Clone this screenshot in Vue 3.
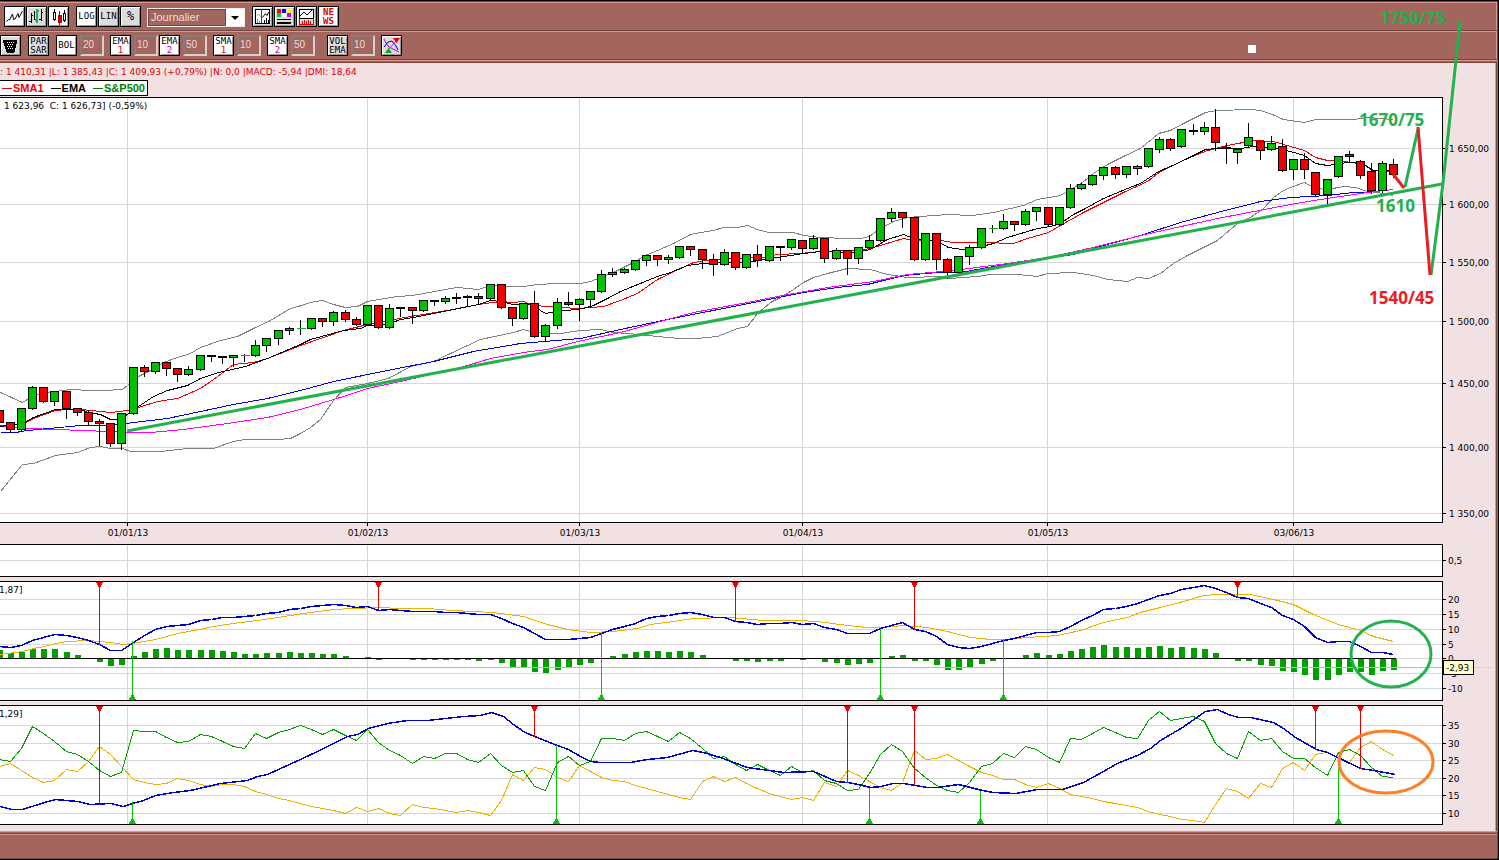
<template>
  <div class="app">
    <header class="toolbar">
      <button type="button" class="tool lit" aria-label="Line chart">
        <svg class="smooth" viewBox="0 0 19 19"><path d="M1.500 14.500l2-2 1 .5 3-6 1 5.500 1.500-.5 3-5.500 1 4 3.500-6.500" /></svg>
      </button>
      <button type="button" class="tool" aria-label="Bar chart">
        <svg viewBox="0 0 19 19">
          <path d="M4 6v10M2 14h2M4 8h2M7 4v9M14 2v12M12 12h2M14 5h2" stroke-width="1" />
          <path d="M10 2v14M8 13h2M10 4h2" stroke="#22b14c" stroke-width="2" />
        </svg>
      </button>
      <button type="button" class="tool lit" aria-label="Candlesticks">
        <svg viewBox="0 0 19 19">
          <path d="M5 2v12M15 3v12" />
          <path d="M4 5h2v7h-2zM14 6h2v7h-2z" fill="#fff" />
          <path d="M10 4v14" stroke="#c00000" />
          <path d="M9 8h3v7h-3z" fill="#c00000" stroke="#c00000" />
        </svg>
      </button>
      <button type="button" class="tool lit group">LOG</button>
      <button type="button" class="tool">LIN</button>
      <button type="button" class="tool percent">%</button>

      <div class="period">
        <select v-model="period" aria-label="Period">
          <option>Journalier</option>
          <option>Hebdomadaire</option>
          <option>Mensuel</option>
        </select>
        <svg class="arrow" viewBox="0 0 18 17" aria-hidden="true"><path d="M5 7h8l-4 4z" fill="#000" stroke="none" /></svg>
      </div>

      <button type="button" class="tool group" aria-label="Cursor">
        <svg viewBox="0 0 19 19">
          <path d="M2 2h14v14h-14z" fill="#fff" />
          <path d="M4 16v-4M6 16v-2" stroke="#888" />
          <path class="thin" d="M4 9l2-2 2 3" stroke="#aaa" />
          <path class="thin" d="M9.500 10.500l3-4 1.500 2 2-3.500" />
          <path d="M11 16v-3M13 16v-5M15 16v-3" />
          <path d="M8 2v14" stroke="#e00000" />
        </svg>
      </button>
      <button type="button" class="tool" aria-label="Colours">
        <svg viewBox="0 0 19 19">
          <g stroke="none">
            <path d="M2 2h4v4H2z" fill="#f00" /><path d="M7 2h4v4H7z" fill="#00f" /><path d="M12 2h4v4h-4z" fill="#ff0" />
            <path d="M2 6h4v4H2z" fill="#0c4" /><path d="M7 6h4v4H7z" fill="#fff" /><path d="M12 6h4v4h-4z" fill="#c0f" />
            <path d="M2 12h14v1H2zM2 15h14v2H2z" fill="#000" />
          </g>
        </svg>
      </button>
      <button type="button" class="tool" aria-label="Indicators">
        <svg viewBox="0 0 19 19">
          <path d="M2 2h14v9h-14z" fill="#fff" />
          <path class="thin" d="M3 9l4-4 3 3 5-5" />
          <path d="M2 12v5h14v-5M5 17v-3M7 17v-4M9 17v-3M11 17v-4M13 17v-3" stroke="#e00000" />
        </svg>
      </button>
      <button type="button" class="tool lit news"><span>NE</span><span>WS</span></button>
    </header>

    <div class="toolbar second">
      <button type="button" class="tool" aria-label="Clear">
        <svg viewBox="0 0 19 19">
          <path d="M2 4h14l-3 12h-7z" fill="#000" />
          <path d="M6 6h1m1 0h1m1 0h1m1 0h1M7 8h1m1 0h1m1 0h1M6 10h1m1 0h1m1 0h1M7 12h1m1 0h1m1 0h1" stroke="#fff" />
        </svg>
      </button>
      <button type="button" class="tool group">PAR<span>SAR</span></button>
      <template v-for="ind in indicators" :key="ind.label + ind.index">
        <button type="button" class="tool" :class="[ind.tone, { lit: ind.lit }]">
          {{ ind.label }}<span v-if="ind.index">{{ ind.index }}</span>
        </button>
        <input v-model="ind.value" class="length" type="text" :aria-label="ind.label + ' ' + ind.index" />
      </template>
      <button type="button" class="tool spaced" aria-label="Signals">
        <svg class="smooth" viewBox="0 0 19 19">
          <path d="M2 3l2 4 3 4 4 2 6 3" stroke="#a0f" />
          <path d="M2 11l4-5 4-1 4 5 2 4" stroke="#00c" />
          <path d="M5 15L15 4" stroke="#f0f" />
          <path d="M11 2h7l-3.500 5z" fill="#e00000" stroke="none" />
          <path d="M3 17h7l-3.500-5z" fill="#00b400" stroke="none" />
        </svg>
      </button>
      <span class="marker"></span>
    </div>

    <main class="panel">
      <p class="info">: 1 410,31 |L: 1 385,43 |C: 1 409,93 (+0,79%) |N: 0,0 |MACD: -5,94 |DMI: 18,64</p>
      <div class="legend">
        <span class="red">SMA1</span>
        <span class="black">EMA</span>
        <span class="green">S&amp;P500</span>
      </div>

      <section class="pane price">
        <svg class="plot">
          <g transform="translate(0.5 -97.5)">
            <path v-for="y in priceTicks" :key="y.at" class="grid" :d="`M-1 ${y.at}H4000`" />
            <path v-for="m in months" :key="m.x" class="grid" :d="`M${m.x} 90V530`" />
            <polyline v-for="l in priceLines" :key="l.name" :stroke="l.color" :points="l.points" />
            <g v-for="(c, i) in candles" :key="i">
              <path class="wick" :d="`M${barX(i)} ${c[0]}V${c[3]}`" />
              <path v-if="c[4] === 'x'" stroke="#00c000" :d="`M${barX(i) - 4} ${c[1]}h9`" />
              <rect v-else class="body" :x="barX(i) - 4" :y="c[1]" width="8" :height="c[2] - c[1] - 1" :fill="fills[c[4]]" />
            </g>
          </g>
          <text x="4" y="11">1 623,96&#160; C: 1 626,73] (-0,59%)</text>
        </svg>
        <svg class="axis">
          <g v-for="y in priceTicks" :key="y.at" :transform="`translate(0 ${y.at - 97})`">
            <path d="M0 .5h3" /><text x="6" y="4">{{ y.label }}</text>
          </g>
        </svg>
      </section>

      <svg class="dates">
        <g v-for="m in months" :key="m.x">
          <path :d="`M${m.x}.5 0v3`" /><text :x="m.x + 1" y="13" text-anchor="middle">{{ m.label }}</text>
        </g>
      </svg>

      <section class="pane volume">
        <svg class="plot">
          <g transform="translate(0.5 -544.5)">
            <path class="grid" d="M-1 560H4000" />
            <path v-for="m in months" :key="m.x" class="grid" :d="`M${m.x} 540V580`" />
          </g>
        </svg>
        <svg class="axis"><path d="M0 16.500h3" /><text x="5" y="20">0,5</text></svg>
      </section>

      <section class="pane study">
        <svg class="plot">
          <g transform="translate(0.5 -581.5)">
            <path v-for="y in macdTicks" :key="y.at" class="grid" :d="`M-1 ${y.at}H4000`" />
            <path v-for="m in months" :key="m.x" class="grid" :d="`M${m.x} 580V702`" />
            <rect v-for="(h, i) in histogram" :key="i" class="hist" :x="barX(i) - 2.5" :y="658.5 - Math.max(h, 0)" width="6" :height="Math.abs(h)" />
            <path class="cursor" d="M-1 667H4000" />
            <path class="wick" d="M-1 658H1395" />
            <polyline stroke="#f0b000" :points="macdSignal" />
            <polyline class="bold" :points="macdLine" />
            <g v-for="s in macdSignals" :key="s.x">
              <path :class="s.side" :d="markerPath(s, 582, 699)" />
            </g>
          </g>
          <text x="-1" y="11">1,87]</text>
        </svg>
        <svg class="axis">
          <g v-for="y in macdTicks" :key="y.at" :transform="`translate(0 ${y.at - 581})`">
            <path d="M0 .5h3" /><text x="5" y="4">{{ y.label }}</text>
          </g>
          <path class="hint-line" d="M30 86.500h20" />
          <rect class="hint" x="0.5" y="79.500" width="30" height="14" />
          <text x="3" y="90">-2,93</text>
        </svg>
      </section>

      <section class="pane study">
        <svg class="plot">
          <g transform="translate(0.5 -705.5)">
            <path v-for="y in dmiTicks" :key="y.at" class="grid" :d="`M-1 ${y.at}H4000`" />
            <path v-for="m in months" :key="m.x" class="grid" :d="`M${m.x} 700V826`" />
            <polyline stroke="#f0b000" :points="diMinus" />
            <polyline stroke="#00a000" :points="diPlus" />
            <polyline class="bold" :points="adx" />
            <g v-for="s in dmiSignals" :key="s.x + s.side">
              <path :class="s.side" :d="markerPath(s, 706, 823)" />
            </g>
          </g>
          <text x="-1" y="11">1,29]</text>
        </svg>
        <svg class="axis">
          <g v-for="y in dmiTicks" :key="y.at" :transform="`translate(0 ${y.at - 705})`">
            <path d="M0 .5h3" /><text x="5" y="4">{{ y.label }}</text>
          </g>
        </svg>
      </section>
    </main>

    <footer class="status"></footer>

    <svg class="annotations">
      <g class="pen-green">
        <path d="M127 431L1442 184M1405 187L1418 129M1431 275L1443 183L1460 22" />
        <ellipse cx="1391" cy="654" rx="40" ry="33" />
      </g>
      <path class="pen-red" d="M1393 174L1404 188M1418 127L1430 275" />
      <ellipse class="pen-orange" cx="1386" cy="762" rx="47" ry="31" />
      <g class="green-note">
        <text x="1380" y="24">1750/75</text>
        <text x="1359" y="126">1670/75</text>
        <text x="1376" y="212">1610</text>
      </g>
      <text class="red-note" x="1369" y="304">1540/45</text>
    </svg>
  </div>
</template>

<script setup>
import { reactive, ref } from 'vue'

const period = ref('Journalier')

const indicators = reactive([
  { label: 'BOL', index: '', value: '20', tone: 'group', lit: true },
  { label: 'EMA', index: '1', value: '10', tone: 'one spaced', lit: true },
  { label: 'EMA', index: '2', value: '50', tone: 'two', lit: true },
  { label: 'SMA', index: '1', value: '10', tone: 'one spaced', lit: true },
  { label: 'SMA', index: '2', value: '50', tone: 'two spaced', lit: true },
  { label: 'VOL', index: 'EMA', value: '10', tone: 'wide', lit: false },
])

const months = [
  { x: 127, label: '01/01/13' },
  { x: 367, label: '01/02/13' },
  { x: 579, label: '01/03/13' },
  { x: 802, label: '01/04/13' },
  { x: 1047, label: '01/05/13' },
  { x: 1293, label: '03/06/13' },
]

const ticks = (ys, labels) => ys.map((at, i) => ({ at, label: labels[i] }))

const priceTicks = ticks(
  [148, 204, 262, 321, 383, 447, 513],
  ['1 650,00', '1 600,00', '1 550,00', '1 500,00', '1 450,00', '1 400,00', '1 350,00']
)
const macdTicks = ticks([599, 614, 629, 644, 658, 673, 688], ['20', '15', '10', '5', '0', '-5', '-10'])
const dmiTicks = ticks([725, 743, 760, 778, 795, 813], ['35', '30', '25', '20', '15', '10'])

// one bar per trading day
const barX = (i) => Math.round(-1.3 + 11.158 * i)
const daily = (ys) => ys.map((y, i) => `${barX(i)},${y}`).join(' ')

const fills = { g: '#00c000', r: '#f00000', k: '#000' }

// high, body top, body bottom, low, colour
const candles = [
  [410, 410, 423, 423, 'r'], [422, 422, 430, 432, 'r'], [407, 408, 430, 430, 'g'], [385, 387, 409, 409, 'g'],
  [386, 387, 402, 402, 'r'], [391, 391, 402, 405, 'g'], [391, 391, 409, 418, 'r'], [408, 408, 413, 415, 'r'],
  [409, 412, 422, 425, 'r'], [418, 421, 424, 445, 'r'], [423, 423, 444, 446, 'r'], [412, 413, 444, 449, 'g'],
  [367, 367, 414, 414, 'g'], [364, 367, 372, 376, 'r'], [361, 362, 372, 373, 'g'], [362, 362, 369, 375, 'r'],
  [368, 368, 375, 381, 'r'], [365, 369, 375, 375, 'g'], [355, 355, 370, 370, 'g'], [355, 355, 357, 361, 'k'],
  [356, 356, 358, 363, 'k'], [354, 355, 358, 366, 'g'], [353, 355, 356, 361, 'x'], [339, 345, 356, 356, 'g'],
  [338, 338, 346, 351, 'g'], [330, 330, 339, 344, 'g'], [326, 328, 331, 334, 'g'], [319, 328, 329, 334, 'x'],
  [317, 318, 329, 329, 'g'], [317, 318, 322, 326, 'r'], [310, 312, 322, 325, 'g'], [309, 312, 320, 321, 'r'],
  [316, 319, 325, 325, 'r'], [304, 305, 325, 325, 'g'], [305, 305, 328, 328, 'r'], [303, 308, 328, 328, 'g'],
  [306, 307, 309, 316, 'k'], [306, 307, 311, 323, 'r'], [299, 300, 311, 311, 'g'], [299, 300, 302, 305, 'k'],
  [295, 298, 302, 303, 'g'], [292, 297, 299, 303, 'k'], [294, 296, 298, 305, 'k'], [292, 296, 299, 304, 'r'],
  [284, 284, 299, 299, 'g'], [284, 284, 308, 308, 'r'], [307, 307, 319, 325, 'r'], [303, 303, 319, 319, 'g'],
  [290, 303, 337, 337, 'r'], [323, 325, 337, 340, 'g'], [297, 302, 326, 328, 'g'], [291, 302, 305, 305, 'r'],
  [297, 299, 305, 320, 'g'], [291, 291, 300, 307, 'g'], [269, 274, 292, 292, 'g'], [267, 272, 275, 276, 'g'],
  [267, 269, 273, 273, 'g'], [259, 260, 270, 270, 'g'], [255, 255, 261, 265, 'g'], [254, 255, 260, 265, 'r'],
  [254, 257, 260, 263, 'g'], [246, 246, 258, 258, 'g'], [246, 246, 250, 255, 'r'], [249, 249, 260, 268, 'r'],
  [253, 259, 265, 275, 'r'], [248, 252, 265, 265, 'g'], [252, 252, 268, 269, 'r'], [253, 254, 268, 268, 'g'],
  [244, 254, 261, 266, 'r'], [246, 246, 261, 261, 'g'], [245, 246, 248, 260, 'k'], [238, 239, 248, 249, 'g'],
  [239, 240, 249, 252, 'r'], [234, 238, 249, 249, 'g'], [237, 238, 259, 262, 'r'], [247, 250, 259, 259, 'g'],
  [250, 250, 259, 274, 'r'], [247, 247, 259, 263, 'g'], [234, 240, 248, 248, 'g'], [217, 218, 241, 241, 'g'],
  [207, 212, 219, 221, 'g'], [212, 212, 218, 227, 'r'], [217, 217, 260, 260, 'r'], [232, 233, 260, 260, 'g'],
  [233, 233, 260, 269, 'r'], [257, 259, 273, 278, 'r'], [255, 256, 273, 273, 'g'], [244, 247, 257, 264, 'g'],
  [228, 228, 248, 248, 'g'], [224, 228, 229, 232, 'x'], [213, 221, 229, 229, 'g'], [220, 221, 225, 230, 'r'],
  [208, 211, 225, 225, 'g'], [207, 207, 212, 220, 'g'], [207, 207, 225, 226, 'r'], [206, 207, 225, 225, 'g'],
  [183, 188, 208, 208, 'g'], [182, 184, 189, 189, 'g'], [175, 175, 185, 185, 'g'], [167, 167, 176, 179, 'g'],
  [165, 167, 175, 178, 'r'], [166, 166, 175, 177, 'g'], [164, 166, 169, 174, 'g'], [147, 148, 167, 167, 'g'],
  [136, 139, 150, 152, 'g'], [137, 139, 149, 150, 'r'], [129, 129, 147, 147, 'g'], [123, 130, 132, 134, 'k'],
  [121, 127, 132, 134, 'g'], [108, 127, 143, 150, 'r'], [142, 147, 149, 163, 'k'], [149, 149, 153, 163, 'g'],
  [122, 137, 146, 146, 'g'], [141, 141, 151, 159, 'r'], [135, 143, 150, 150, 'g'], [138, 146, 171, 171, 'r'],
  [159, 159, 170, 179, 'g'], [152, 159, 170, 178, 'r'], [171, 172, 195, 196, 'r'], [179, 179, 195, 206, 'g'],
  [155, 156, 177, 177, 'g'], [150, 154, 157, 161, 'r'], [159, 161, 176, 178, 'r'], [162, 171, 191, 193, 'r'],
  [160, 163, 191, 192, 'g'], [158, 164, 175, 177, 'r'],
]

const priceLines = [
  {
    name: 'bollinger upper',
    color: '#808080',
    points:
      '0,392 22,402 33,395 55,391 70,389 90,390 104,390 122,389 127,385 133,379 138,376 150,370 163,362 177,357 190,353 200,347 220,340 237,336 253,328 270,320 288,309 310,302 322,300 333,304 345,307 357,306 367,301 378,299 397,296 412,295 423,293 445,289 457,287 478,289 490,285 507,286 523,286 537,284 557,283 580,283 590,281 613,272 633,262 647,254 657,250 673,243 690,234 700,232 713,230 723,227 737,227 747,225 757,229 768,232 793,232 803,235 820,237 847,238 860,238 869,236 880,228 893,221 907,217 920,216 947,214 972,215 993,212 1023,205 1037,199 1060,195 1070,189 1082,182 1093,173 1107,164 1123,156 1140,148 1158,133 1170,130 1183,123 1205,112 1217,110 1250,109 1260,110 1272,114 1283,119 1290,120 1304,122 1315,119 1353,119 1367,117 1393,119',
  },
  {
    name: 'bollinger lower',
    color: '#808080',
    points:
      '0,491 22,464 33,463 55,455 77,452 90,447 100,446 110,448 122,448 130,451 160,451 187,448 213,448 233,441 245,439 277,439 290,438 300,433 310,427 320,419 333,400 345,387 367,383 388,378 410,366 433,361 450,353 480,339 513,332 523,329 530,331 545,333 560,333 580,330 600,329 613,332 627,333 647,335 667,337 680,338 697,338 717,336 737,328 747,326 757,313 770,302 780,297 793,289 803,282 813,277 827,273 847,268 870,269 887,274 907,277 940,276 948,278 977,276 990,274 1017,274 1037,276 1047,273 1073,272 1093,275 1107,279 1127,281 1137,277 1148,278 1160,273 1173,263 1187,255 1217,240 1237,223 1250,217 1263,208 1273,197 1283,190 1290,187 1304,182 1315,188 1327,189 1343,186 1355,187 1367,191 1377,192 1393,195',
  },
  {
    name: 'ema 50',
    color: '#0000e0',
    points:
      '0,432 15,432 27,430 80,425 110,425 133,422 167,418 233,404 267,398 300,390 333,381 387,370 433,361 473,351 520,343 580,338 620,329 667,319 753,302 803,292 837,287 867,284 903,275 937,272 960,272 1010,263 1073,254 1107,244 1140,235 1180,222 1217,212 1260,201 1290,197 1310,196 1327,195 1353,192 1380,191',
  },
  {
    name: 'sma 50',
    color: '#ff00ff',
    points:
      '0,426 27,428 83,430 133,432 150,432 183,429 227,423 267,417 300,409 343,396 367,388 400,381 460,367 490,358 523,352 547,349 577,341 620,332 667,319 693,312 747,302 777,296 827,287 873,281 907,274 953,270 1007,263 1047,257 1093,247 1140,235 1217,218 1290,204 1313,200 1367,192 1393,189',
  },
  {
    name: 'sma 10',
    color: '#f00000',
    points:
      '0,425 22,424 33,418 55,410 67,409 80,409 100,411 110,412 127,410 138,407 157,401 177,398 200,388 213,379 233,364 253,362 267,358 300,345 343,330 367,324 410,316 447,310 478,304 500,301 513,302 523,301 533,305 547,306 577,308 603,306 620,300 637,293 657,279 680,268 693,262 713,259 763,257 777,254 800,253 820,251 860,250 873,247 903,238 913,240 940,240 953,242 983,242 1013,243 1027,238 1048,232 1067,221 1083,212 1123,192 1147,181 1157,173 1170,166 1187,158 1207,150 1227,145 1253,140 1273,141 1290,146 1304,150 1315,157 1327,160 1343,161 1362,163 1373,170 1393,171',
  },
  {
    name: 'ema 10',
    color: '#000',
    points:
      '0,426 22,423 33,417 55,409 67,409 80,409 88,412 100,414 110,419 117,419 127,414 138,406 153,396 167,390 187,385 200,378 218,372 245,366 267,358 300,344 310,339 343,330 360,328 367,325 387,324 400,319 413,317 433,313 453,309 478,304 490,300 500,301 513,304 530,304 545,313 557,311 567,310 583,308 593,305 607,298 620,291 657,276 670,272 687,265 703,263 730,262 753,261 777,257 803,253 820,251 853,252 870,249 887,239 903,234 913,238 937,241 948,247 962,249 977,247 993,243 1007,237 1037,228 1050,226 1060,223 1073,214 1083,209 1103,198 1127,188 1140,183 1158,171 1170,166 1187,158 1205,149 1217,148 1240,148 1253,146 1273,147 1290,151 1304,155 1315,163 1327,165 1347,162 1362,163 1372,170 1393,170',
  },
]

const histogram = [
  9, 6, 7, 10, 10, 10, 7, 4, 0, -3, -7, -6, 3, 7, 10, 11, 9, 9, 9, 9, 8, 7, 5, 5, 6, 6, 7, 6, 6, 5, 5, 3, 1, 2, -1,
  0, 0, -1, -1, -1, -1, -1, -1, -2, -1, -4, -8, -8, -13, -14, -11, -9, -6, -4, 0, 3, 5, 7, 8, 8, 7, 8, 7, 4, 1, 0,
  -2, -2, -3, -2, -2, 0, -1, 0, -3, -4, -6, -5, -4, 0, 3, 4, -2, -2, -6, -11, -11, -9, -5, -2, 0, 1, 4, 6, 4, 5, 8,
  10, 12, 14, 12, 12, 11, 12, 13, 11, 12, 11, 10, 6, 1, -2, -2, -6, -7, -12, -13, -16, -21, -21, -16, -13, -13, -16,
  -12, -11,
]

const macdLine = daily([
  646, 647, 645, 640, 637, 634, 635, 637, 640, 644, 650, 650, 642, 635, 629, 626, 625, 624, 620, 619, 617, 617, 616,
  615, 613, 612, 609, 608, 606, 605, 604, 605, 607, 606, 610, 609, 610, 611, 611, 611, 612, 612, 613, 614, 614, 618,
  623, 627, 633, 639, 639, 639, 638, 637, 633, 629, 626, 623, 618, 616, 615, 613, 612, 614, 617, 617, 621, 622, 624,
  623, 623, 622, 624, 623, 627, 629, 633, 633, 633, 628, 625, 622, 629, 631, 636, 644, 647, 648, 646, 643, 640, 638,
  635, 632, 632, 631, 626, 620, 615, 609, 608, 606, 603, 599, 595, 593, 589, 587, 585, 588, 592, 597, 598, 603, 607,
  615, 619, 626, 637, 642, 641, 641, 646, 652, 652, 654,
])

const macdSignal =
  '0,654 22,651 33,648 44,646 55,643 66,641 88,640 99,641 110,642 123,644 132,643 155,639 177,633 199,629 213,626 233,623 257,620 277,617 290,615 310,612 333,609 353,608 378,607 400,608 427,608 452,610 493,612 523,616 547,624 567,629 590,632 613,631 637,628 650,624 673,621 693,618 730,617 763,620 797,620 817,621 847,625 867,627 880,627 903,625 927,627 947,631 970,637 990,639 1007,639 1027,637 1057,635 1080,630 1103,622 1127,617 1140,612 1160,607 1183,601 1203,595 1217,594 1250,594 1273,599 1293,604 1313,614 1338,624 1360,630 1373,636 1393,641'

const diPlus = daily([
  759, 761, 748, 726, 733, 741, 751, 754, 761, 770, 776, 772, 730, 731, 731, 737, 742, 741, 734, 736, 741, 746, 748,
  733, 738, 732, 729, 725, 729, 734, 729, 735, 740, 729, 742, 750, 755, 763, 756, 758, 753, 753, 759, 762, 753, 765,
  772, 770, 786, 790, 762, 756, 765, 761, 738, 738, 740, 733, 731, 736, 741, 732, 738, 748, 758, 756, 764, 770, 764,
  770, 775, 766, 772, 770, 780, 783, 790, 789, 773, 754, 744, 751, 768, 777, 785, 790, 792, 782, 766, 763, 753, 757,
  746, 749, 757, 762, 738, 739, 733, 727, 732, 737, 738, 720, 711, 720, 718, 716, 721, 743, 753, 758, 731, 740, 738,
  751, 758, 758, 767, 775, 752, 749, 755, 767, 776, 777,
])

const diMinus = daily([
  766, 763, 770, 777, 782, 780, 769, 771, 761, 746, 754, 766, 779, 782, 784, 783, 778, 780, 784, 786, 784, 784, 786,
  791, 794, 798, 800, 803, 806, 808, 810, 813, 807, 811, 808, 813, 815, 804, 807, 808, 810, 812, 810, 812, 815, 800,
  774, 780, 767, 769, 777, 781, 765, 771, 777, 780, 781, 785, 788, 791, 794, 797, 799, 781, 776, 781, 777, 783, 788,
  793, 796, 799, 797, 800, 782, 786, 770, 775, 781, 787, 790, 782, 750, 759, 758, 754, 760, 766, 772, 775, 779, 779,
  784, 787, 783, 788, 794, 796, 798, 801, 803, 805, 807, 811, 814, 816, 819, 820, 822, 804, 788, 791, 798, 783, 787,
  768, 762, 770, 754, 752, 758, 762, 747, 741, 749, 755,
])

const adx =
  '0,806 11,809 22,809 44,802 55,799 77,801 90,804 110,803 123,806 132,803 143,800 155,795 173,792 190,790 203,787 220,783 247,780 257,776 267,774 280,768 300,759 317,751 333,743 347,736 357,734 368,728 387,723 407,720 427,720 463,716 480,715 491,712 503,716 513,724 523,731 534,736 557,745 568,749 580,756 590,761 600,762 630,762 647,759 667,757 692,750 703,752 720,757 733,762 747,767 783,772 813,771 836,781 847,782 858,784 870,787 881,786 892,783 903,783 915,785 927,787 937,787 958,784 970,787 982,790 993,792 1015,793 1037,789 1062,789 1083,782 1103,771 1117,763 1137,755 1150,748 1160,740 1182,727 1205,711 1217,709 1228,714 1238,717 1250,717 1273,722 1283,728 1295,737 1316,749 1327,752 1360,768 1373,770 1395,774'

const macdSignals = [
  { x: 99, to: 644, side: 'sell' },
  { x: 132, to: 640, side: 'buy' },
  { x: 378, to: 609, side: 'sell' },
  { x: 601, to: 632, side: 'buy' },
  { x: 735, to: 621, side: 'sell' },
  { x: 880, to: 628, side: 'buy' },
  { x: 914, to: 629, side: 'sell' },
  { x: 1003, to: 638, side: 'buy' },
  { x: 1237, to: 597, side: 'sell' },
]

const dmiSignals = [
  { x: 99, to: 804, side: 'sell' },
  { x: 132, to: 801, side: 'buy' },
  { x: 534, to: 736, side: 'sell' },
  { x: 556, to: 744, side: 'buy' },
  { x: 847, to: 782, side: 'sell' },
  { x: 869, to: 787, side: 'buy' },
  { x: 914, to: 785, side: 'sell' },
  { x: 980, to: 790, side: 'buy' },
  { x: 1315, to: 749, side: 'sell' },
  { x: 1338, to: 767, side: 'buy' },
  { x: 1360, to: 768, side: 'sell' },
]

// sells hang from the top edge, buys stand on the bottom edge
function markerPath(s, top, bottom) {
  if (s.side === 'sell') return `M${s.x} ${s.to}V${top + 5}l-3 -5h6l-3 5`
  return `M${s.x} ${s.to}V${bottom - 5}l-3 5h6l-3 -5`
}
</script>

<style>
body {
  margin: 0;
}
</style>

<style scoped>
.app {
  --brown: #a3665e;
  --edge: #74463f;
  --shine: #e09589;
  --paper: #f2e1e2;
  position: relative;
  display: flex;
  flex-direction: column;
  min-height: 100vh;
  box-sizing: border-box;
  border: solid #000;
  border-width: 1px 1px 1px 0;
  background: var(--brown);
  font-family: 'DejaVu Sans', Verdana, sans-serif;
  font-size: 9px;
  overflow: hidden;
}

.toolbar {
  display: flex;
  gap: 1px;
  padding: 4px 0 3px 4px;
  border: solid var(--edge);
  border-width: 1px 1px 0 0;
  box-shadow: inset -1px 1px var(--shine);
}

.toolbar.second {
  padding-left: 0;
}

.tool {
  display: flex;
  flex-direction: column;
  align-items: center;
  justify-content: center;
  flex: none;
  box-sizing: border-box;
  width: 21px;
  height: 21px;
  padding: 0;
  border: 1px solid #000;
  border-radius: 0;
  background: #dcdcdc;
  box-shadow: inset 1px 1px #fff, inset -1px -1px #999;
  color: #000;
  font: 9px/9px 'DejaVu Sans Mono', monospace;
}

.tool.lit {
  background: #fff;
}

.tool svg {
  width: 19px;
  height: 19px;
  fill: none;
  stroke: #000;
}

.tool path {
  shape-rendering: crispEdges;
}

.tool .smooth path,
.tool .thin {
  shape-rendering: auto;
}

.tool.group {
  margin-left: 6px;
}

.tool.spaced {
  margin-left: 5px;
}

.tool.wide {
  margin-left: 11px;
}

.tool.percent {
  font-size: 12px;
}

.tool.one span,
.tool.news {
  color: #e00000;
}

.tool.two span {
  color: #c000c0;
}

.tool.news {
  font-weight: bold;
}

.period {
  display: flex;
  box-sizing: border-box;
  width: 98px;
  height: 19px;
  margin: 2px 0 0 5px;
  border: 1px solid #eee;
  background: #fff;
}

.period select {
  flex: 1;
  min-width: 0;
  padding: 0 0 0 2px;
  border: 1px solid var(--edge);
  border-radius: 0;
  appearance: none;
  background: var(--brown);
  color: #f0dcd9;
  font: 11px/15px 'Liberation Sans', Arial, sans-serif;
}

.period .arrow {
  width: 18px;
  height: 17px;
}

.length {
  box-sizing: border-box;
  width: 24px;
  height: 21px;
  margin: 0 0 0 2px;
  padding: 0 0 2px 1px;
  border: 2px solid;
  border-color: #8a7a78 #d8cfce #d8cfce #8a7a78;
  border-radius: 0;
  background: var(--brown);
  color: #eadbd9;
  font: 10px 'Liberation Sans', Arial, sans-serif;
}

.marker {
  width: 8px;
  height: 8px;
  margin: 10px 241px 0 auto;
  background: #fff;
}

.panel {
  flex: 1;
  margin-right: 1px;
  margin-top: 4px;
  border-right: 1px solid var(--edge);
  background: var(--paper);
  box-shadow: 0 -1px var(--edge), 0 -2px var(--brown), 0 -3px var(--shine), 0 -4px var(--edge), inset -1px 0 var(--shine);
}

.info {
  margin: 0;
  height: 17px;
  line-height: 19px;
  color: #e00000;
  white-space: nowrap;
}

.legend {
  display: flex;
  gap: 7px;
  width: max-content;
  box-sizing: border-box;
  height: 16px;
  margin-bottom: 1px;
  padding: 0 2px;
  border: 1px solid #000;
  border-left: 0;
  background: #fff;
  font: bold 11px/14px 'Liberation Sans', Arial, sans-serif;
}

.legend span {
  display: flex;
  align-items: center;
  gap: 1px;
}

.legend span::before {
  content: '';
  width: 10px;
  height: 1px;
  background: currentColor;
}

.legend .red {
  color: #f00000;
}

.legend .black {
  color: #000;
}

.legend .green {
  color: #008000;
}

.pane {
  display: flex;
  margin-bottom: 4px;
}

.pane.price {
  height: 426px;
  margin-bottom: 0;
}

.pane.volume {
  height: 33px;
}

.pane.study {
  height: 120px;
}

.pane:last-child {
  margin-bottom: 6px;
}

.plot {
  flex: 1;
  min-width: 0;
  height: 100%;
  box-sizing: border-box;
  border: solid #000;
  border-width: 1px 1px 1px 0;
  background: #fff;
  fill: none;
}

.plot path,
.plot polyline,
.plot rect,
.axis path,
.axis rect,
.dates path {
  shape-rendering: crispEdges;
}

.plot text,
.axis text,
.dates text {
  fill: #000;
}

.grid {
  stroke: #d6d6d6;
}

.cursor {
  stroke: #b8b8b8;
}

.wick,
.body,
.axis path,
.dates path {
  stroke: #000;
}

.hist {
  fill: #00a000;
}

.bold {
  stroke: #0000d0;
  stroke-width: 1.5px;
}

.sell {
  stroke: #e80000;
  fill: #e80000;
}

.buy {
  stroke: #00c800;
  fill: #00c800;
}

.axis {
  flex: none;
  width: 53px;
  height: 100%;
}

.axis .hint-line {
  stroke: #d6d6d6;
}

.axis .hint {
  fill: #ffffcc;
  stroke: #000;
}

.dates {
  display: block;
  width: 100%;
  height: 21px;
}

.status {
  height: 28px;
  box-sizing: border-box;
  border-bottom: 1px solid var(--edge);
  border-right: 1px solid var(--edge);
  box-shadow: inset 0 1px var(--shine), inset 0 2px var(--brown), inset 0 3px var(--edge), inset 0 4px var(--shine);
}

.annotations {
  position: absolute;
  inset: -1px 0 0;
  width: 100%;
  height: 100%;
  fill: none;
  stroke-width: 3px;
  pointer-events: none;
}

.pen-green {
  stroke: #22b14c;
}

.pen-red {
  stroke: #ed1c24;
}

.pen-orange {
  stroke: #ff7f27;
}

.annotations text {
  font: bold 17px 'Open Sans', 'Noto Sans', sans-serif;
}

.green-note {
  fill: #22b14c;
}

.red-note {
  fill: #ed1c24;
}
</style>
